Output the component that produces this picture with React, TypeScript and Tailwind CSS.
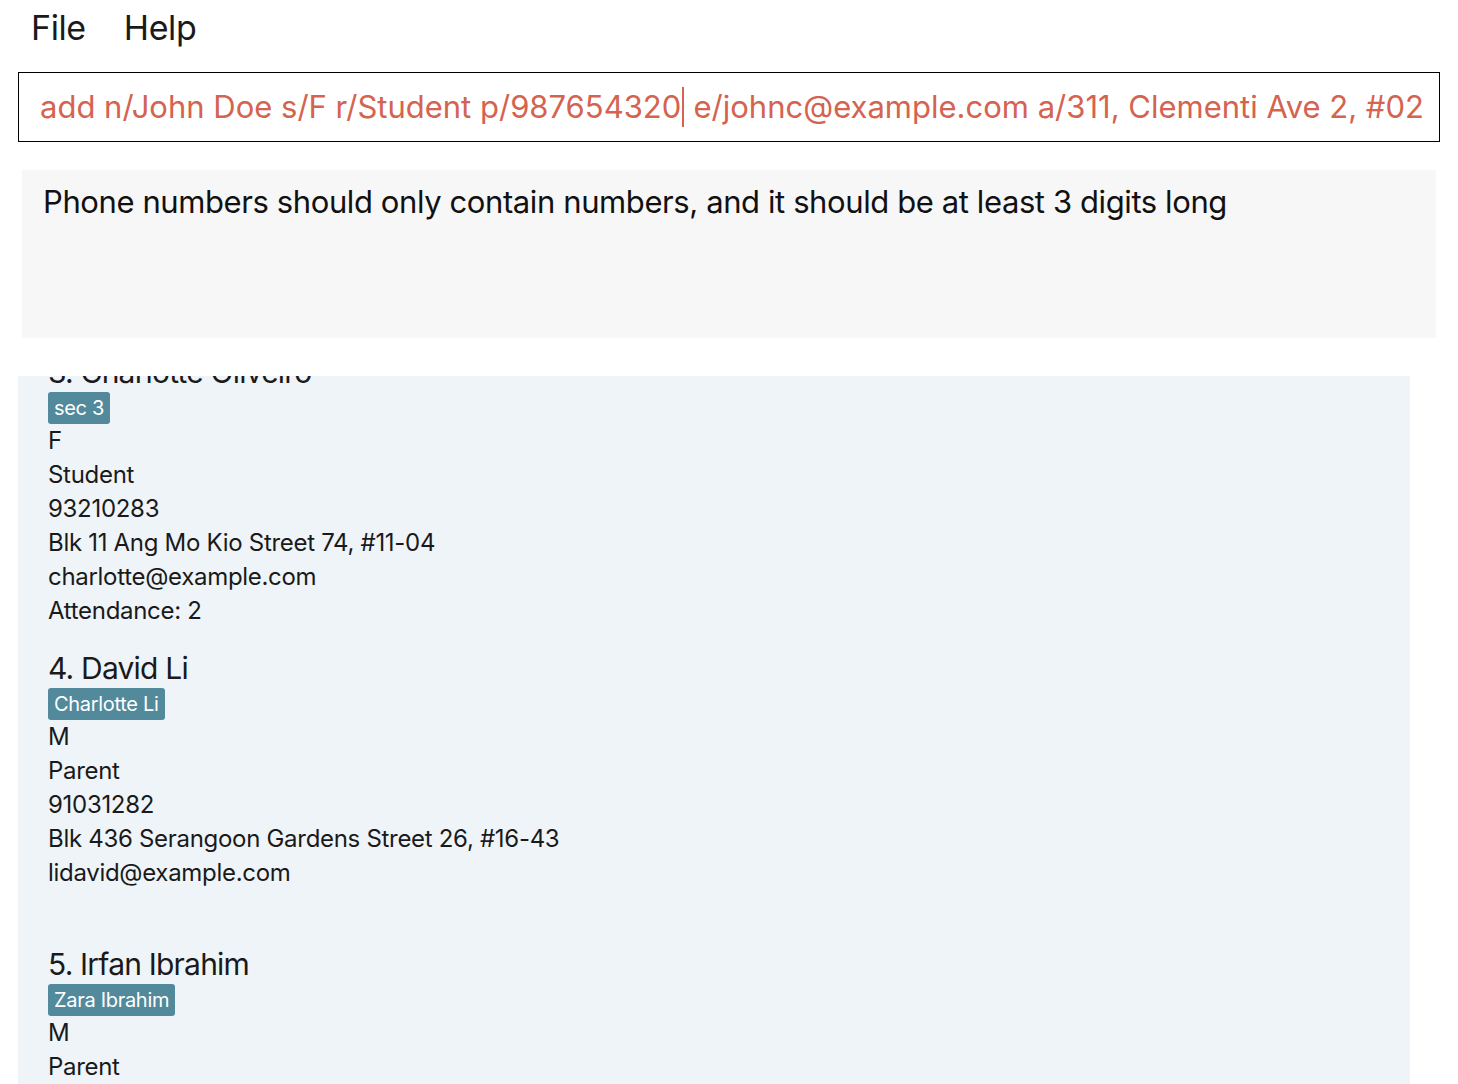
import React from "react";

type Person = {
  name: string;
  tag: string;
  lines: string[];
};

const people: Person[] = [
  {
    name: "3. Charlotte Oliveiro",
    tag: "sec 3",
    lines: [
      "F",
      "Student",
      "93210283",
      "Blk 11 Ang Mo Kio Street 74, #11-04",
      "charlotte@example.com",
      "Attendance: 2",
    ],
  },
  {
    name: "4. David Li",
    tag: "Charlotte Li",
    lines: [
      "M",
      "Parent",
      "91031282",
      "Blk 436 Serangoon Gardens Street 26, #16-43",
      "lidavid@example.com",
      "",
    ],
  },
  {
    name: "5. Irfan Ibrahim",
    tag: "Zara Ibrahim",
    lines: [
      "M",
      "Parent",
      "92492021",
      "Blk 47 Tampines Street 20, #17-35",
      "irfan@example.com",
      "",
    ],
  },
];

function Card({ p }: { p: Person }) {
  return (
    <div className="pt-[20px] pl-[30px]">
      <div className="h-[40px] text-[30px] leading-[40px] text-[#1a1a1a] tracking-[-0.8px]">
        {p.name}
      </div>
      <div className="flex">
        <span className="h-[32px] rounded-[3px] bg-[#528a9c] px-[6px] text-[20px] leading-[32px] text-white tracking-[-0.3px]">
          {p.tag}
        </span>
      </div>
      {p.lines.map((l, i) => (
        <div
          key={i}
          className="h-[34px] text-[24px] leading-[34px] text-[#1a1a1a] tracking-[-0.3px]"
        >
          {l}
        </div>
      ))}
    </div>
  );
}

export default function App() {
  return (
    <div
      className="h-[1084px] w-[1458px] overflow-hidden bg-white"
      style={{ fontFamily: "Inter, 'Noto Sans', sans-serif" }}
    >
      <div className="flex h-[54px] items-center gap-[38px] pl-[31px] text-[34px] text-[#1a1a1a] tracking-[-0.4px]">
        <span>File</span>
        <span>Help</span>
      </div>
      <div className="mt-[18px] ml-[18px] flex h-[70px] w-[1422px] items-center overflow-hidden border border-black pl-[21px] text-[31px] whitespace-nowrap text-[#d4634f]">
        <span>add n/John Doe s/F r/Student p/987654320</span>
        <span className="mx-[1px] inline-block h-[40px] w-[1.5px] bg-[#d4634f]" />
        <span>&nbsp;e/johnc@example.com a/311, Clementi Ave 2, #02</span>
      </div>
      <div className="mt-[28px] ml-[22px] h-[168px] w-[1414px] bg-[#f7f7f7] pt-[12px] pl-[21px] text-[31px] leading-[40px] text-[#111] tracking-[-0.4px]">
        Phone numbers should only contain numbers, and it should be at least 3 digits long
      </div>
      <div className="mt-[38px] ml-[18px] h-[708px] w-[1392px] overflow-hidden bg-[#eff4f9]">
        <div className="-mt-[44px]">
          {people.map((p) => (
            <Card key={p.name} p={p} />
          ))}
        </div>
      </div>
    </div>
  );
}
